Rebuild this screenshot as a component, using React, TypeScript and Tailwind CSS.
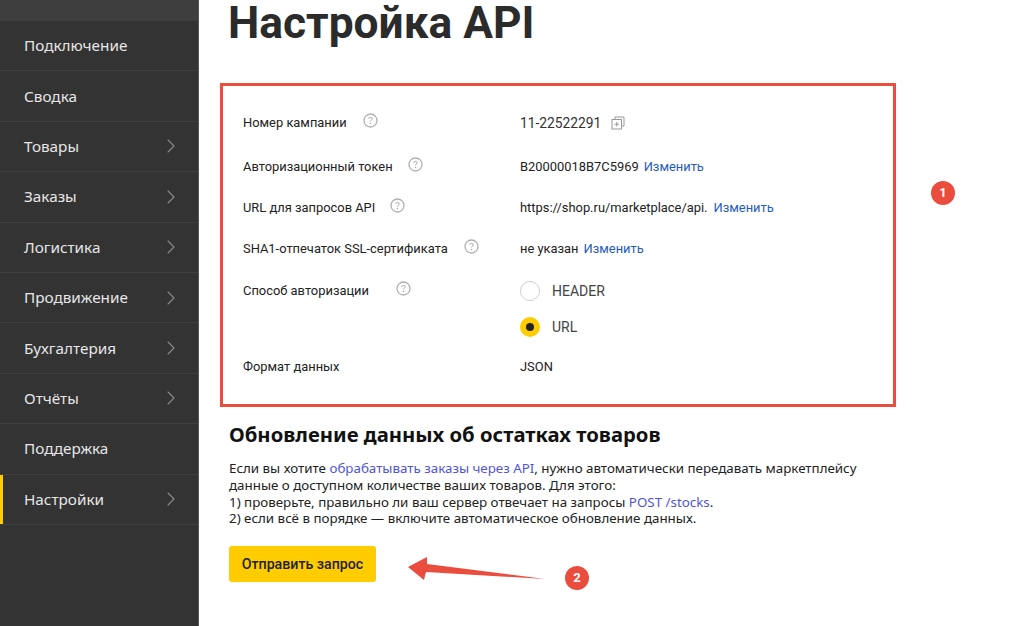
import { ChevronRight } from "lucide-react";

const menu = [
  { label: "Подключение", arrow: false },
  { label: "Сводка", arrow: false },
  { label: "Товары", arrow: true },
  { label: "Заказы", arrow: true },
  { label: "Логистика", arrow: true },
  { label: "Продвижение", arrow: true },
  { label: "Бухгалтерия", arrow: true },
  { label: "Отчёты", arrow: true },
  { label: "Поддержка", arrow: false },
  { label: "Настройки", arrow: true, active: true },
];

function Help() {
  return (
    <svg width="15" height="15" viewBox="0 0 15 15" fill="none" className="shrink-0 -translate-y-0.5">
      <circle cx="7.5" cy="7.5" r="6.500" stroke="#b0b0b0" strokeWidth="1.300" />
      <path d="M5.800 6c0-1 .8-1.600 1.700-1.600s1.700.6 1.700 1.500c0 1.200-1.700 1.300-1.700 2.500" stroke="#a0a0a0" strokeWidth="1" />
      <circle cx="7.500" cy="10.400" r=".7" fill="#a0a0a0" />
    </svg>
  );
}

function CopyIcon() {
  return (
    <svg width="14" height="14" viewBox="0 0 14 14" fill="none" className="shrink-0">
      <path d="M4 3V1h9v9h-2" stroke="#999" strokeWidth="1" />
      <rect x="1" y="3.500" width="9.500" height="9.500" stroke="#999" strokeWidth="1" />
      <path d="M5.700 6v4.500M3.500 8.250h4.500" stroke="#999" strokeWidth="1" />
    </svg>
  );
}

function Row({ h, label, gap, children }: { h: string; label: string; gap: string; children: React.ReactNode }) {
  return (
    <div className={`flex items-center ${h}`}>
      <div className="flex w-[277px] items-center">
        <span>{label}</span>
        <span className={gap}>
          <Help />
        </span>
      </div>
      <div className="flex items-center">{children}</div>
    </div>
  );
}

function Badge({ n, className }: { n: number; className: string }) {
  return (
    <div className={`absolute flex h-6 w-6 items-center justify-center rounded-full bg-[#ea4c3d] text-[13px] font-bold text-white ${className}`}>
      {n}
    </div>
  );
}

export default function App() {
  return (
    <div className="relative flex h-[626px] w-[1024px] overflow-hidden bg-white font-['Roboto',sans-serif] text-[#222]">
      {/* Sidebar */}
      <aside className="h-full w-[199px] shrink-0 border-r border-[#555] bg-[#333333]">
        <div className="h-[21px] bg-[#3e3e3e]" />
        {menu.map((item) => (
          <div
            key={item.label}
            className={`flex h-[50.4px] items-center justify-between border-b border-[#3f3f3f] pl-6 pr-[15px] font-['Noto_Sans',sans-serif] text-[15.3px] text-[#e6e6e6] ${item.active ? "shadow-[inset_3px_0_0_#ffcc00]" : ""}`}
          >
            <span>{item.label}</span>
            {item.arrow && <ChevronRight size={24} strokeWidth={1.1} className="text-[#8a8a8a]" />}
          </div>
        ))}
      </aside>

      {/* Content */}
      <main className="min-w-0 flex-1 pl-[21px]">
        <h1 className="ml-[8px] h-[83px] text-[44.3px] font-bold leading-[46px] text-[#2b2b2b]">Настройка API</h1>

        <section className="h-[324px] w-[676px] border-[3px] border-[#ea4c3d] pl-[20px] pt-[17px] text-[12.9px]">
          <Row h="h-[40px]" label="Номер кампании" gap="ml-[16px]">
            <span className="text-[13.8px] text-[#333]">11-22522291</span>
            <span className="ml-[10px]">
              <CopyIcon />
            </span>
          </Row>
          <Row h="h-[48px]" label="Авторизационный токен" gap="ml-[15px]">
            <span>B20000018B7C5969</span>
            <a className="ml-[5px] text-[#1f5bc4]">Изменить</a>
          </Row>
          <Row h="h-[34px]" label="URL для запросов API" gap="ml-[15px]">
            <span>https://shop.ru/marketplace/api.</span>
            <a className="ml-[6px] text-[#1f5bc4]">Изменить</a>
          </Row>
          <Row h="h-[48px]" label="SHA1-отпечаток SSL-сертификата" gap="ml-[16px]">
            <span>не указан</span>
            <a className="ml-[5px] text-[#1f5bc4]">Изменить</a>
          </Row>
          <Row h="h-[36px]" label="Способ авторизации" gap="ml-[27px]">
            <span className="h-5 w-5 rounded-full border border-[#cfcfcf] bg-white" />
            <span className="ml-3 text-[14px] text-[#444]">HEADER</span>
          </Row>
          <div className="flex h-[36px] items-center pl-[277px]">
            <span className="flex h-5 w-5 items-center justify-center rounded-full bg-[#ffcc00]">
              <span className="h-2 w-2 rounded-full bg-[#222]" />
            </span>
            <span className="ml-3 text-[14px] text-[#444]">URL</span>
          </div>
          <div className="flex h-[44px] items-center">
            <span className="w-[277px]">Формат данных</span>
            <span>JSON</span>
          </div>
        </section>

        <div className="ml-[8px] font-['Noto_Sans',sans-serif]">
          <h2 className="ml-px mt-[13px] text-[20.25px] font-bold leading-[28px] text-[#111]">Обновление данных об остатках товаров</h2>
          <p className="ml-px mt-[12px] w-[660px] text-[13.35px] leading-[16.8px] text-[#222]">
            Если вы хотите <a className="text-[#4f55dc]">обрабатывать заказы через API</a>, нужно автоматически передавать маркетплейсу
            <br />
            данные о доступном количестве ваших товаров. Для этого:
            <br />
            1) проверьте, правильно ли ваш сервер отвечает на запросы <a className="text-[#4f55dc]">POST /stocks</a>.
            <br />
            2) если всё в порядке — включите автоматическое обновление данных.
          </p>
          <button className="ml-px mt-[19px] h-9 w-[147px] rounded-[3px] bg-[#ffcc00] font-['Roboto',sans-serif] text-[14.2px] font-medium text-[#222]">Отправить запрос</button>
        </div>
      </main>

      {/* Annotations */}
      <Badge n={1} className="left-[931px] top-[181px]" />
      <Badge n={2} className="left-[565px] top-[566px]" />
      <svg className="absolute left-[405px] top-[555px]" width="142" height="28" viewBox="0 0 142 28" fill="none">
        <path d="M3 12 L22 2 L22 9 L140 24 L21 17 L19 25 Z" fill="#ea4c3d" />
      </svg>
    </div>
  );
}
